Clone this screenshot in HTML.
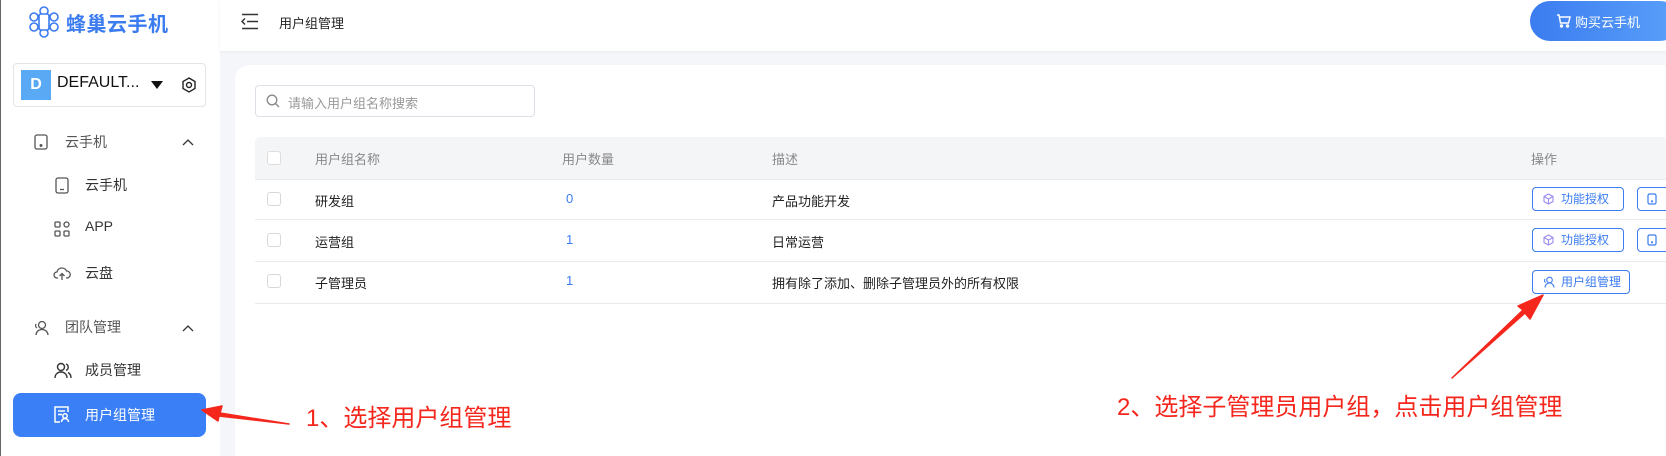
<!DOCTYPE html>
<html style="height:456px;overflow:hidden"><head><meta charset="utf-8"><style>
*{margin:0;padding:0;box-sizing:border-box}
body{width:1666px;height:456px;overflow:hidden;background:#f4f6f9;font-family:"Liberation Sans","Noto Sans CJK SC",sans-serif;position:relative;color:#222}
.a{position:absolute}
.side{left:0;top:0;width:220px;height:456px;background:#fff;border-left:1px solid #666}
.hdr{left:220px;top:0;width:1446px;height:51px;background:#fff;box-shadow:0 1px 4px rgba(0,0,0,.05)}
.card{left:235px;top:65px;width:1431px;height:391px;background:#fff;border-radius:14px 0 0 0}
.t{font-size:13px;color:#222}
.g{color:#888}
.cb{position:absolute;left:267px;width:14px;height:14px;border:1px solid #d8d8d8;border-radius:3px;background:#fff}
.line{position:absolute;left:255px;width:1411px;height:1px;background:#e8eaee}
.btn{position:absolute;border:1px solid #3b7cf0;border-radius:4px;color:#3b7cf0;font-size:12px;height:24px;line-height:22px;padding-left:28px}
.mi{font-size:14px;color:#333}
</style></head><body>
<div class="a side"></div>
<svg class="a" style="left:29px;top:6px" width="30" height="32" viewBox="0 0 30 32" fill="none" stroke="#3b7cf0" stroke-width="1.6"><circle cx="15" cy="5" r="4"/><circle cx="15" cy="27" r="4"/><circle cx="5" cy="11" r="4"/><circle cx="25" cy="11" r="4"/><circle cx="5" cy="21" r="4"/><circle cx="25" cy="21" r="4"/><rect x="10" y="8" width="10" height="16" rx="2" fill="#fff"/></svg>
<div class="a" style="left:66px;top:8px;font-size:20px;font-weight:bold;color:#3b7cf0;letter-spacing:0.5px">蜂巢云手机</div>
<div class="a" style="left:13px;top:63px;width:193px;height:44px;border:1px solid #e2e4e8;border-radius:4px"></div>
<div class="a" style="left:21px;top:70px;width:30px;height:30px;background:#5aa9f5;color:#fff;font-weight:bold;font-size:16px;text-align:center;line-height:30px">D</div>
<div class="a" style="left:57px;top:74px;font-size:16px;color:#111">DEFAULT...</div>
<div class="a" style="left:151px;top:81px;width:0;height:0;border-left:6px solid transparent;border-right:6px solid transparent;border-top:8px solid #111"></div>
<svg class="a" style="left:181px;top:77px" width="16" height="16" viewBox="0 0 16 16" fill="none" stroke="#222" stroke-width="1.4"><path d="M8 1l6 3.5v7L8 15 2 11.5v-7z"/><circle cx="8" cy="8" r="2.5"/></svg>
<svg class="a" style="left:34px;top:134px" width="15" height="16" viewBox="0 0 15 16" fill="none" stroke="#555" stroke-width="1.3"><rect x="1" y="1" width="12" height="14" rx="2"/><circle cx="7" cy="11.5" r=".8" fill="#555"/></svg>
<div class="a mi" style="left:65px;top:132px;color:#555">云手机</div>
<svg class="a" style="left:182px;top:138px" width="12" height="8" viewBox="0 0 12 8" fill="none" stroke="#333" stroke-width="1.3"><path d="M1 7l5-5 5 5"/></svg>
<svg class="a" style="left:55px;top:177px" width="15" height="17" viewBox="0 0 15 17" fill="none" stroke="#555" stroke-width="1.3"><rect x="1" y="1" width="12" height="15" rx="2"/><path d="M5 12.5h4"/></svg>
<div class="a mi" style="left:85px;top:175px">云手机</div>
<svg class="a" style="left:54px;top:221px" width="16" height="16" viewBox="0 0 16 16" fill="none" stroke="#555" stroke-width="1.3"><rect x="1" y="1" width="5" height="5" rx="1"/><rect x="10" y="1" width="5" height="5" rx="2.5"/><rect x="1" y="10" width="5" height="5" rx="1"/><rect x="10" y="10" width="5" height="5" rx="1"/></svg>
<div class="a mi" style="left:85px;top:218px">APP</div>
<svg class="a" style="left:53px;top:266px" width="18" height="15" viewBox="0 0 18 15" fill="none" stroke="#555" stroke-width="1.3"><path d="M5 12H4a3 3 0 010-6 5 5 0 019.5-1A3.5 3.5 0 0114 12h-1"/><path d="M9 14V8M6.5 10L9 7.5l2.5 2.5"/></svg>
<div class="a mi" style="left:85px;top:263px">云盘</div>
<svg class="a" style="left:33px;top:319px" width="17" height="17" viewBox="0 0 17 17" fill="none" stroke="#555" stroke-width="1.3"><circle cx="9" cy="6" r="3.5"/><path d="M3 16c0-3 2.5-5.5 6-5.5s6 2.5 6 5.5M4 9a3 3 0 01-1-4"/></svg>
<div class="a mi" style="left:65px;top:317px;color:#555">团队管理</div>
<svg class="a" style="left:182px;top:324px" width="12" height="8" viewBox="0 0 12 8" fill="none" stroke="#333" stroke-width="1.3"><path d="M1 7l5-5 5 5"/></svg>
<svg class="a" style="left:54px;top:362px" width="18" height="17" viewBox="0 0 18 17" fill="none" stroke="#333" stroke-width="1.4"><circle cx="7" cy="5" r="3.5"/><path d="M1 16c0-3.5 2.5-6 6-6s6 2.5 6 6M12 2a3.5 3.5 0 010 6.5M14 10.5c2 1 3 3 3 5.5"/></svg>
<div class="a mi" style="left:85px;top:360px">成员管理</div>
<div class="a" style="left:13px;top:393px;width:193px;height:44px;background:#3a7ff5;border-radius:8px"></div>
<svg class="a" style="left:54px;top:406px" width="16" height="17" viewBox="0 0 16 17" fill="none" stroke="#fff" stroke-width="1.5"><path d="M14 6V1H1v15h5"/><path d="M4 5h7M4 8.5h4"/><circle cx="11" cy="10" r="2.2"/><path d="M7.5 16c0-2 1.5-3.5 3.5-3.5s3.5 1.5 3.5 3.5"/></svg>
<div class="a mi" style="left:85px;top:405px;color:#fff">用户组管理</div>
<div class="a hdr"></div>
<svg class="a" style="left:241px;top:13px" width="18" height="17" viewBox="0 0 18 17" fill="none" stroke="#333" stroke-width="1.5"><path d="M1 1.5h16M6 8.5h11M1 15.5h16M4 5.5l-3 3 3 3"/></svg>
<div class="a" style="left:279px;top:13px;font-size:13px;color:#222">用户组管理</div>
<div class="a" style="left:1530px;top:1px;width:150px;height:40px;border-radius:20px;background:linear-gradient(90deg,#3b7cf0,#5aa0fa)"></div>
<svg class="a" style="left:1556px;top:14px" width="15" height="14" viewBox="0 0 15 14" fill="none" stroke="#fff" stroke-width="1.4"><path d="M1 1h2l1.5 8h8L14 3H4"/><circle cx="5.5" cy="12" r="1"/><circle cx="11.5" cy="12" r="1"/></svg>
<div class="a" style="left:1575px;top:12px;font-size:13px;color:#fff">购买云手机</div>
<div class="a card"></div>
<div class="a" style="left:255px;top:85px;width:280px;height:32px;border:1px solid #dcdfe6;border-radius:4px"></div>
<svg class="a" style="left:266px;top:94px" width="14" height="14" viewBox="0 0 14 14" fill="none" stroke="#888" stroke-width="1.3"><circle cx="6" cy="6" r="4.8"/><path d="M9.5 9.5L13 13"/></svg>
<div class="a" style="left:288px;top:93px;font-size:13px;color:#999">请输入用户组名称搜索</div>
<div class="a" style="left:255px;top:137px;width:1411px;height:42px;background:#f4f5f7;border-radius:6px 0 0 0"></div>
<div class="cb" style="top:151px;border-color:#ddd"></div>
<div class="a t g" style="left:315px;top:149px">用户组名称</div>
<div class="a t g" style="left:562px;top:149px">用户数量</div>
<div class="a t g" style="left:772px;top:149px">描述</div>
<div class="a t g" style="left:1531px;top:149px">操作</div>
<div class="line" style="top:179px"></div>
<div class="cb" style="top:192px"></div>
<div class="a t" style="left:315px;top:191px">研发组</div>
<div class="a t" style="left:566px;top:191px;color:#3b7cf0">0</div>
<div class="a t" style="left:772px;top:191px">产品功能开发</div>
<div class="line" style="top:219px"></div>
<div class="cb" style="top:233px"></div>
<div class="a t" style="left:315px;top:232px">运营组</div>
<div class="a t" style="left:566px;top:232px;color:#3b7cf0">1</div>
<div class="a t" style="left:772px;top:232px">日常运营</div>
<div class="line" style="top:261px"></div>
<div class="cb" style="top:274px"></div>
<div class="a t" style="left:315px;top:273px">子管理员</div>
<div class="a t" style="left:566px;top:273px;color:#3b7cf0">1</div>
<div class="a t" style="left:772px;top:273px">拥有除了添加、删除子管理员外的所有权限</div>
<div class="line" style="top:303px"></div>
<div class="btn" style="left:1532px;top:187px;width:92px">功能授权</div>
<div class="btn" style="left:1532px;top:228px;width:92px">功能授权</div>
<div class="btn" style="left:1637px;top:187px;width:60px"></div>
<div class="btn" style="left:1637px;top:228px;width:60px"></div>
<div class="btn" style="left:1532px;top:270px;width:98px">用户组管理</div>
<svg class="a" style="left:1543px;top:193px" width="11" height="12" viewBox="0 0 11 12" fill="none" stroke="#9a8cf0" stroke-width="1.1"><path d="M5.5 1L10 3.5v5L5.5 11 1 8.5v-5zM1 3.5l4.5 2.5L10 3.5M5.5 6v5"/></svg>
<svg class="a" style="left:1543px;top:234px" width="11" height="12" viewBox="0 0 11 12" fill="none" stroke="#9a8cf0" stroke-width="1.1"><path d="M5.5 1L10 3.5v5L5.5 11 1 8.5v-5zM1 3.5l4.5 2.5L10 3.5M5.5 6v5"/></svg>
<svg class="a" style="left:1647px;top:193px" width="10" height="12" viewBox="0 0 10 12" fill="none" stroke="#3b7cf0" stroke-width="1.2"><rect x="1" y="1" width="8" height="10" rx="1.5"/><circle cx="5" cy="8.3" r=".5"/></svg>
<svg class="a" style="left:1647px;top:234px" width="10" height="12" viewBox="0 0 10 12" fill="none" stroke="#3b7cf0" stroke-width="1.2"><rect x="1" y="1" width="8" height="10" rx="1.5"/><circle cx="5" cy="8.3" r=".5"/></svg>
<svg class="a" style="left:1543px;top:276px" width="12" height="12" viewBox="0 0 12 12" fill="none" stroke="#3b7cf0" stroke-width="1.1"><circle cx="6.5" cy="4" r="2.8"/><path d="M2 11.5c0-2.5 2-4.5 4.5-4.5S11 9 11 11.5M2.5 6.5A2.5 2.5 0 012 3"/></svg>
<svg class="a" style="left:0;top:0" width="1666" height="456">
<path d="M289 424 L220 413 L222 406 L202 410 L218 421 L219 416 Z" fill="#f5261c" stroke="#f5261c" stroke-width="1.5" stroke-linejoin="round"/>
<path d="M1452 378 L1525 313 L1530 319 L1543 295 L1518 306 L1523 310 Z" fill="#f5261c" stroke="#f5261c" stroke-width="1.5" stroke-linejoin="round"/>
</svg>
<div class="a" style="left:306px;top:398px;font-size:24px;color:#f5261c">1、选择用户组管理</div>
<div class="a" style="left:1117px;top:387px;font-size:24px;color:#f5261c">2、选择子管理员用户组，点击用户组管理</div>
</body></html>
